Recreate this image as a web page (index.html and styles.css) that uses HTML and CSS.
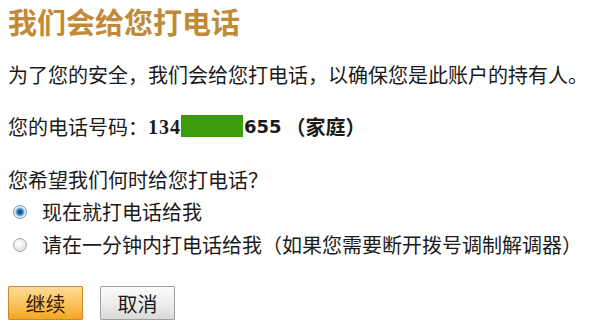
FILE: index.html
```html
<!DOCTYPE html>
<html lang="zh-CN">
<head>
  <meta charset="UTF-8">
  <title>我们会给您打电话</title>
  <link rel="stylesheet" href="styles.css">
</head>
<body>
  <div class="page">
    <h1 class="title">我们会给您打电话</h1>
    <p class="line intro">为了您的安全，我们会给您打电话，以确保您是此账户的持有人。</p>
    <p class="line phone">您的电话号码：<b class="num">134</b><span class="mask"></span><b class="num tail">655</b><b class="kind">（家庭）</b></p>
    <p class="line ask">您希望我们何时给您打电话？</p>
    <label class="opt opt-first"><input type="radio" name="when" checked><span>现在就打电话给我</span></label>
    <label class="opt"><input type="radio" name="when"><span>请在一分钟内打电话给我（如果您需要断开拨号调制解调器）</span></label>
    <div class="actions">
      <button class="btn btn-go">继续</button>
      <button class="btn btn-cancel">取消</button>
    </div>
  </div>
</body>
</html>
```

FILE: styles.css
```css
html,body,div,p,h1{
  margin: 0;
  padding: 0;
}
body{
  background-color: #fff;
  color: #1a1a1a;
  font-family: "Noto Sans CJK SC", "Noto Sans", sans-serif;
  font-size: 20px;
}
.page{
  padding: 5px 8px 0 8px;
}
.title{
  font-size: 29px;
  line-height: 32px;
  font-weight: bold;
  color: #c08a36;
}
.line{
  line-height: 24px;
  white-space: nowrap;
}
.intro{
  margin-top: 26px;
}
.phone{
  margin-top: 28px;
  display: flex;
  align-items: center;
}
.num{
  font-family: "Liberation Serif", serif;
  font-size: 20px;
  letter-spacing: 1px;
}
.tail{
  font-family: "DejaVu Sans", sans-serif;
  font-size: 18px;
  letter-spacing: 0;
  margin-left: 1px;
  margin-right: 4px;
}
.kind{
  font-weight: bold;
}
.mask{
  display: inline-block;
  width: 62px;
  height: 22px;
  margin-top: -2px;
  background-color: #3c9d0b;
}
.ask{
  margin-top: 29px;
}
.opt{
  display: flex;
  align-items: center;
  height: 24px;
  line-height: 24px;
  margin-top: 9px;
  padding-left: 5px;
  white-space: nowrap;
}
.opt-first{
  margin-top: 8px;
}
.opt input{
  appearance: none;
  -webkit-appearance: none;
  width: 14px;
  height: 14px;
  margin: 0 15px 0 0;
  border-radius: 50%;
  border: 1px solid #a8a8a8;
  background: radial-gradient(circle at 40% 35%, #fff 0, #e6e6e6 65%, #cccccc 100%);
  box-sizing: border-box;
}
.opt input:checked{
  border-color: #7f93a6;
  background: radial-gradient(circle, #0d3f6e 0, #2a73b3 30%, #6fb2e4 45%, #d8e9f5 58%, #eef2f6 72%, #aab7c4 100%);
}
.actions{
  margin-top: 29px;
  display: flex;
  gap: 17px;
}
.btn{
  width: 75px;
  height: 34px;
  font-family: "Noto Sans CJK SC", sans-serif;
  font-size: 20px;
  color: #1a1a1a;
  padding: 0;
  border-radius: 1px;
}
.btn-go{
  border: 1px solid #c9892f;
  background: linear-gradient(#fddc94, #fbc25c 55%, #f4a51f);
  color: #3a1a05;
}
.btn-cancel{
  border: 1px solid #a0a0a0;
  background: linear-gradient(#fbfbfb, #ececec 55%, #d9d9d9);
}
```
